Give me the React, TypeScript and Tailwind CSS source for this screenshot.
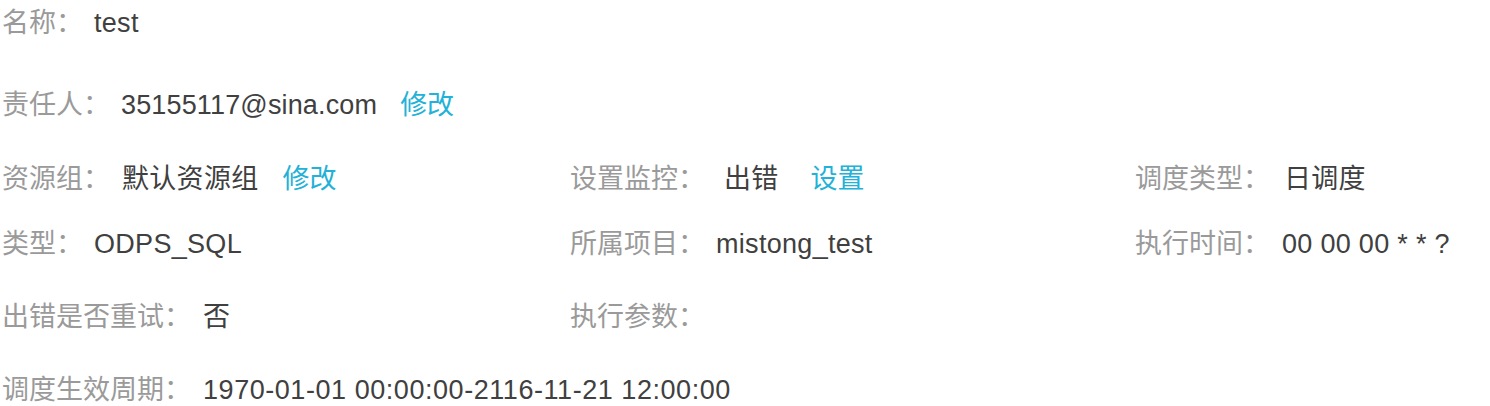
import React from 'react';

interface FieldProps {
  label: string;
  value?: React.ReactNode;
  gap?: string;
  link?: string;
  linkGap?: string;
  track?: string;
}

const Field: React.FC<FieldProps> = ({
  label,
  value,
  gap = 'ml-[11px]',
  link,
  linkGap = 'ml-[24px]',
  track = 'tracking-[0.3px]',
}) => (
  <div className="flex items-center whitespace-nowrap">
    <span className="text-[#9a9a9a]">{label}：</span>
    {value !== undefined && <span className={`${gap} ${track} text-[#404040]`}>{value}</span>}
    {link && <a className={`${linkGap} text-[#22b1d8] cursor-pointer`}>{link}</a>}
  </div>
);

const App: React.FC = () => {
  return (
    <div
      className="w-[1490px] h-[406px] bg-white pl-[2px] text-[27px] leading-[44px] overflow-hidden"
      style={{ fontFamily: '"Liberation Sans", "Noto Sans CJK SC", sans-serif' }}
    >
      <div className="flex flex-col">
        <div className="mt-px">
          <Field label="名称" value="test" />
        </div>

        <div className="mt-[38px]">
          <Field
            label="责任人"
            value="35155117@sina.com"
            gap="ml-[11px]"
            track="tracking-[0.15px]"
            link="修改"
            linkGap="ml-[23px]"
          />
        </div>

        <div className="mt-[30px] grid grid-cols-[568px_565px_1fr]">
          <Field label="资源组" value="默认资源组" gap="ml-[12px]" link="修改" linkGap="ml-[24px]" />
          <Field label="设置监控" value="出错" gap="ml-[19px]" link="设置" linkGap="ml-[32px]" />
          <Field label="调度类型" value="日调度" gap="ml-[14px]" />
        </div>

        <div className="mt-[21px] grid grid-cols-[568px_565px_1fr]">
          <Field label="类型" value="ODPS_SQL" />
          <Field label="所属项目" value="mistong_test" gap="ml-[11px]" />
          <Field label="执行时间" value="00 00 00 * * ?" gap="ml-[12px]" />
        </div>

        <div className="mt-[29px] grid grid-cols-[568px_565px_1fr]">
          <Field label="出错是否重试" value="否" gap="ml-[12px]" />
          <Field label="执行参数" />
          <div />
        </div>

        <div className="mt-[29px]">
          <Field
            label="调度生效周期"
            value="1970-01-01 00:00:00-2116-11-21 12:00:00"
            gap="ml-[12px]"
            track="tracking-[0.55px]"
          />
        </div>
      </div>
    </div>
  );
};

export default App;
